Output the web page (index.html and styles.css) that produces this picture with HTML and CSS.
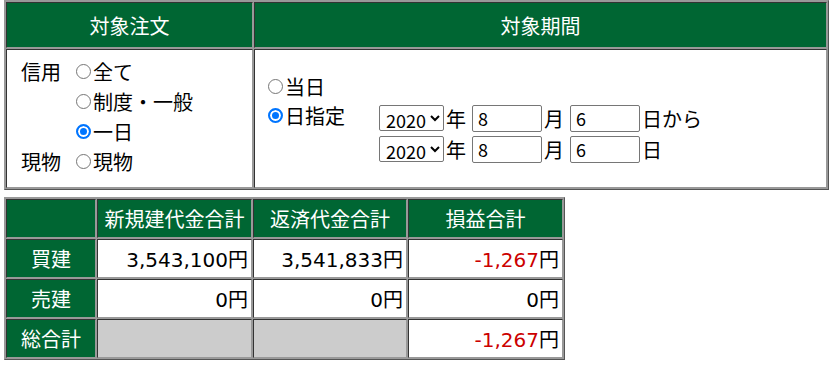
FILE: index.html
```html
<!DOCTYPE html>
<html>
<head>
  <title>損益</title>
  <link rel="stylesheet" href="styles.css">
</head>
<body>
  <table class="grid top">
    <tr>
      <th class="col-order">対象注文</th>
      <th class="col-period">対象期間</th>
    </tr>
    <tr>
      <td class="order-cell">
        <table class="order-list">
          <tr>
            <td class="kind">信用</td>
            <td><label class="opt"><input type="radio" name="order">全て</label></td>
          </tr>
          <tr>
            <td class="kind"></td>
            <td><label class="opt"><input type="radio" name="order">制度・一般</label></td>
          </tr>
          <tr>
            <td class="kind"></td>
            <td><label class="opt"><input type="radio" name="order" checked>一日</label></td>
          </tr>
          <tr>
            <td class="kind">現物</td>
            <td><label class="opt"><input type="radio" name="order">現物</label></td>
          </tr>
        </table>
      </td>
      <td class="period-cell">
        <div class="period">
          <label class="opt today"><input type="radio" name="period">当日</label>
          <span></span>
          <label class="opt pick"><input type="radio" name="period" checked>日指定</label>
          <div class="date-row">
            <select><option>2020</option></select><span class="unit">年</span>
            <input type="text" value="8"><span class="unit">月</span>
            <input type="text" value="6"><span class="unit">日から</span>
          </div>
          <span></span>
          <div class="date-row">
            <select><option>2020</option></select><span class="unit">年</span>
            <input type="text" value="8"><span class="unit">月</span>
            <input type="text" value="6"><span class="unit">日</span>
          </div>
        </div>
      </td>
    </tr>
  </table>

  <table class="grid summary">
    <tr>
      <th class="c-label"></th>
      <th class="c-val">新規建代金合計</th>
      <th class="c-val2">返済代金合計</th>
      <th class="c-val">損益合計</th>
    </tr>
    <tr>
      <th>買建</th>
      <td>3,543,100円</td>
      <td>3,541,833円</td>
      <td><span class="minus">-1,267</span>円</td>
    </tr>
    <tr>
      <th>売建</th>
      <td>0円</td>
      <td>0円</td>
      <td>0円</td>
    </tr>
    <tr>
      <th>総合計</th>
      <td class="blank"></td>
      <td class="blank"></td>
      <td><span class="minus">-1,267</span>円</td>
    </tr>
  </table>
</body>
</html>
```

FILE: styles.css
```css
body {
  margin: 0;
  padding: 0 4px;
  font-family: "DejaVu Sans", "Noto Sans CJK JP", sans-serif;
  font-size: 20px;
  color: #000;
  background: #fff;
}
.grid {
  border-collapse: separate;
  border-spacing: 1px;
  background: #999;
  border: 1px solid;
  border-color: #999 #555 #555 #999;
  table-layout: fixed;
}
.grid th, .grid td {
  border: 1px solid;
  border-color: #333 #999 #999 #333;
  padding: 0;
}
.grid th {
  background: #006633;
  color: #fff;
  font-weight: normal;
  text-align: center;
}
.grid td {
  background: #fff;
}

/* top table */
.top {
  width: 825px;
}
.top th {
  height: 44px;
}
.col-order {
  width: 245px;
}
.period-cell {
  height: 137px;
  vertical-align: middle;
}
.grid td.order-cell {
  height: 131px;
  vertical-align: top;
  padding-top: 6px;
}
.order-list {
  border-collapse: collapse;
  margin-left: 14px;
}
.grid .order-list td {
  border: none;
  background: transparent;
  height: 30px;
  padding: 0;
}
.grid .order-list td.kind {
  width: 55px;
}
.opt {
  display: inline-flex;
  align-items: center;
  white-space: nowrap;
}
.opt input {
  appearance: none;
  flex: none;
  box-sizing: border-box;
  width: 15px;
  height: 15px;
  margin: 0 2px 0 0;
  border: 1px solid #767676;
  border-radius: 50%;
  background: #fff;
}
.opt input:checked {
  border: 2px solid #0075ff;
  background: #0075ff;
  box-shadow: inset 0 0 0 2px #fff;
}
.period {
  display: grid;
  grid-template-columns: 111px auto;
  grid-template-rows: 30px 31px 31px;
  align-items: center;
  margin-left: 13px;
}
.today {
  margin-bottom: 2px;
}
.pick {
  margin-bottom: 5px;
}
.date-row {
  display: flex;
  align-items: center;
}
.date-row select {
  width: 65px;
  height: 26px;
  font-family: "Noto Sans CJK JP", sans-serif;
  font-size: 18px;
  padding: 0 0 0 2px;
  border: 1px solid #767676;
  border-radius: 2px;
  background: #fff;
  color: #000;
}
.date-row input {
  width: 70px;
  height: 27px;
  box-sizing: border-box;
  font-family: "Noto Sans CJK JP", sans-serif;
  font-size: 18px;
  padding: 0 5px;
  border: 1px solid #767676;
  border-radius: 2px;
}
.unit {
  margin: 0 6px 0 2px;
}

/* summary table */
.summary {
  margin-top: 7px;
}
.summary th, .summary td {
  height: 37px;
}
.summary td {
  text-align: right;
  padding-right: 3px;
}
.c-label {
  width: 88px;
}
.c-val {
  width: 153px;
}
.c-val2 {
  width: 152px;
}
.summary td.blank {
  background: #ccc;
}
.minus {
  color: #cc0000;
}
```
